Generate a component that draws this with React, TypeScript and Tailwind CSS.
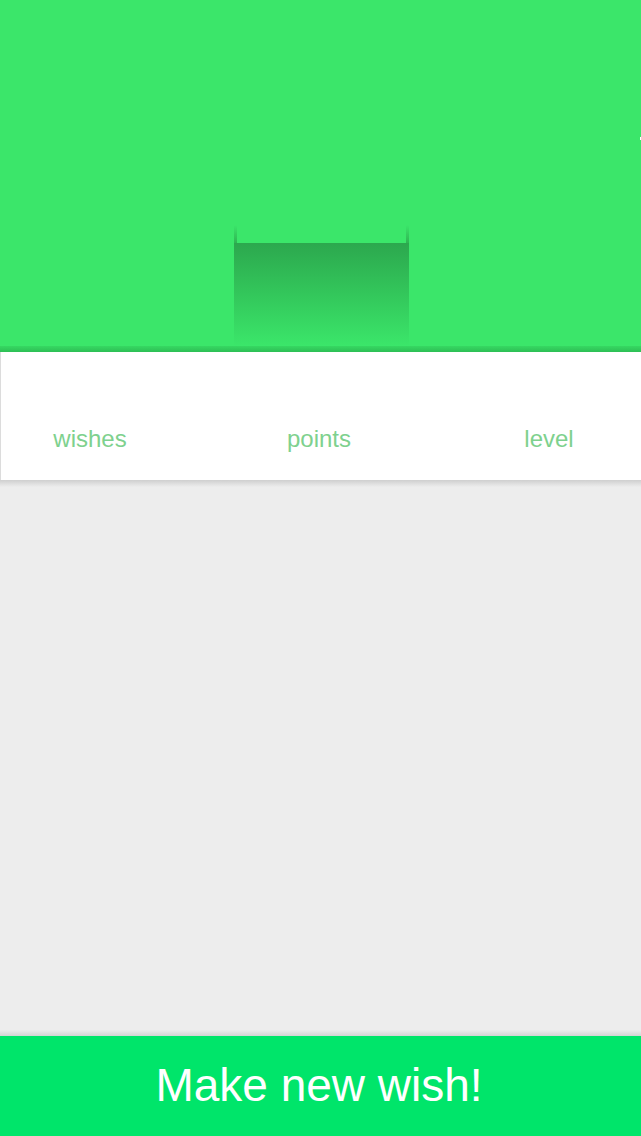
import * as React from "react";

const STATS = ["wishes", "points", "level"];

export default function App() {
  return (
    <div
      className="relative flex h-[1136px] w-[641px] flex-col overflow-hidden bg-[#ededed]"
      style={{ fontFamily: '"Liberation Sans", Arial, sans-serif' }}
    >
      {/* Header */}
      <div className="flex h-[352px] flex-col justify-end bg-[#3be66a]">
        {/* Tab */}
        <div className="ml-[234px] flex w-[175px] flex-col">
          <div className="flex h-[18px] justify-between">
            <div className="w-[3px] bg-gradient-to-b from-transparent to-[#2a9f49]/70" />
            <div className="w-[3px] bg-gradient-to-b from-transparent to-[#2a9f49]/70" />
          </div>
          <div className="h-[103px] bg-gradient-to-b from-[#2ca84e] via-[#33c75b] to-[#3be66a]" />
        </div>
        <div className="h-[6px] bg-gradient-to-b from-[#36d862] to-[#2dbf55]" />
      </div>

      {/* Stats */}
      <div className="grid h-[128px] grid-cols-[178px_180px_180px] gap-x-[50px] border-l border-[#dcdcdc] bg-white pb-[29px]">
        {STATS.map((label) => (
          <div key={label} className="flex items-end justify-center text-[24px] leading-none text-[#7ed18e]">
            {label}
          </div>
        ))}
      </div>
      <div className="h-[7px] bg-gradient-to-b from-[#cfcfcf] to-[#ededed]" />

      {/* Empty list */}
      <div className="flex-1" />
      <div className="h-[6px] bg-gradient-to-b from-[#ededed] to-[#d4d4d4]" />

      {/* Button */}
      <button className="flex h-[100px] items-center justify-center bg-[#00e56a] pb-[2px] pr-[3px] text-[46px] leading-none text-white">
        Make new wish!
      </button>

      <div className="absolute left-[640px] top-[137px] h-[3px] w-[1px] bg-white" />
    </div>
  );
}
